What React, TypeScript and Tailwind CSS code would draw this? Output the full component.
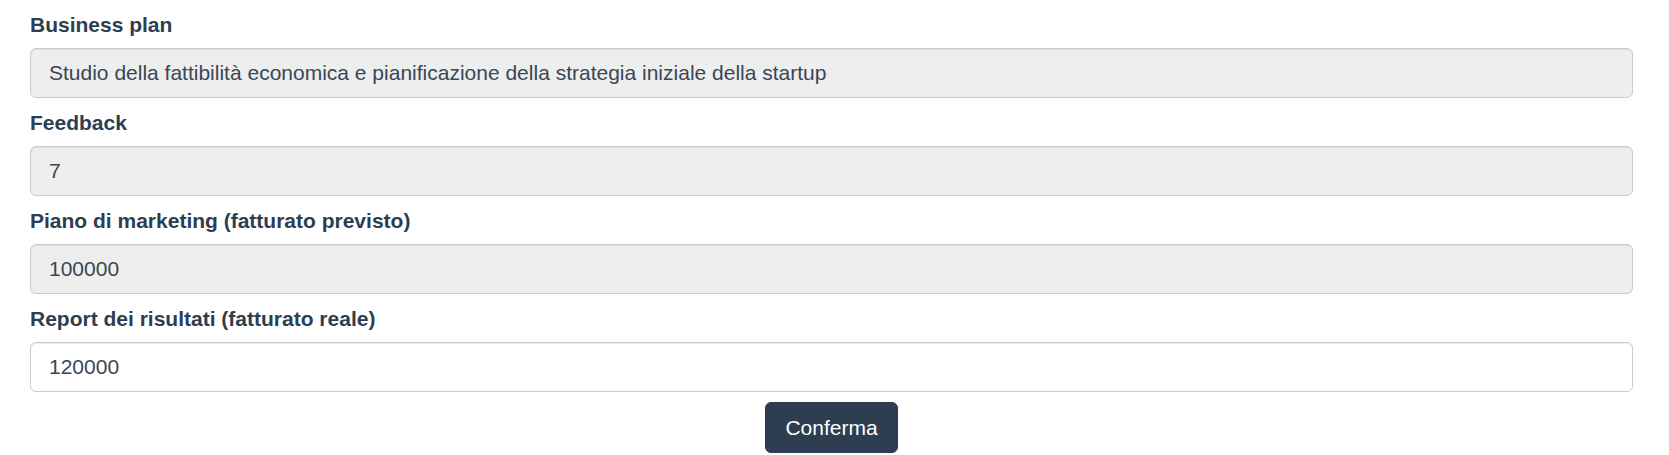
import React, { useState } from 'react';

interface FieldProps {
  label: string;
  value: string;
  readOnly?: boolean;
  onChange?: (v: string) => void;
}

const Field: React.FC<FieldProps> = ({ label, value, readOnly, onChange }) => (
  <div className="flex flex-col">
    <label className="text-[21px] leading-[30px] font-bold text-[#2c3e50] mb-2">{label}</label>
    <input
      type="text"
      value={value}
      readOnly={readOnly}
      onChange={(e) => onChange?.(e.target.value)}
      className={`h-[50px] w-full rounded-[6px] border border-[#cccccc] px-[18px] text-[21px] text-[#3a4654] shadow-[inset_0_1px_1px_rgba(0,0,0,0.075)] outline-none ${
        readOnly ? 'bg-[#eeeeee]' : 'bg-white'
      }`}
    />
  </div>
);

const App: React.FC = () => {
  const [report, setReport] = useState('120000');

  return (
    <div className="w-[1669px] h-[455px] bg-white font-['Liberation_Sans',Arial,sans-serif] pl-[30px] pr-[36px] pt-[10px]">
      <form className="flex flex-col gap-[10px]" onSubmit={(e) => e.preventDefault()}>
        <Field
          label="Business plan"
          value="Studio della fattibilità economica e pianificazione della strategia iniziale della startup"
          readOnly
        />
        <Field label="Feedback" value="7" readOnly />
        <Field label="Piano di marketing (fatturato previsto)" value="100000" readOnly />
        <Field label="Report dei risultati (fatturato reale)" value={report} onChange={setReport} />
        <div className="flex justify-center">
          <button
            type="submit"
            className="h-[51px] rounded-[6px] border border-[#2c3e50] bg-[#2c3e50] px-[19px] text-[21px] text-white"
          >
            Conferma
          </button>
        </div>
      </form>
    </div>
  );
};

export default App;
